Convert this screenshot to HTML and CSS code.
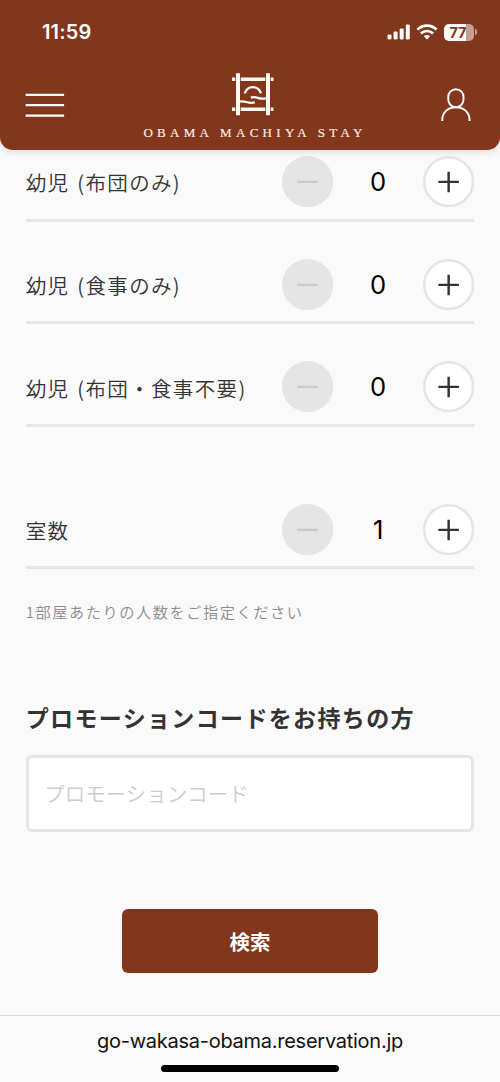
FILE: index.html
```html
<!DOCTYPE html>
<html lang="ja">
<head>
<meta charset="utf-8">
<title>OBAMA MACHIYA STAY</title>
<link rel="stylesheet" href="styles.css">
</head>
<body>
<svg class="defs" width="0" height="0">
  <symbol id="minus" viewBox="0 0 40 40"><circle cx="20" cy="20" r="20" fill="#e5e5e5"/><path d="M12 20.2h16" stroke="#cbcbcb" stroke-width="1.9"/></symbol>
  <symbol id="plus" viewBox="0 0 40 40"><circle cx="20" cy="20" r="19" fill="#fff" stroke="#e5e5e5" stroke-width="2"/><path d="M12 20.2h16M20 12.2v16" stroke="#333" stroke-width="1.9"/></symbol>
</svg>
<div class="screen">
  <header class="header">
    <div class="status">
      <span class="time">11:59</span>
      <div class="indicators">
        <svg width="24" height="16" viewBox="0 0 24 16" fill="#fff"><rect x="0.5" y="10.4" width="4" height="5" rx="1.1"/><rect x="6.6" y="7.6" width="4" height="7.8" rx="1.1"/><rect x="12.7" y="4.4" width="4" height="11" rx="1.1"/><rect x="18.8" y="0.6" width="4" height="14.8" rx="1.1"/></svg>
        <svg class="wifi" width="22" height="16" viewBox="0 0 22 16" fill="none" stroke="#fff" stroke-width="2.7"><path d="M1.4 5.6a13.8 13.8 0 0 1 19.2 0"/><path d="M4.9 9.5a8.7 8.7 0 0 1 12.2 0"/><path d="M11 15.5l-3.2-3.3a4.6 4.6 0 0 1 6.4 0z" fill="#fff" stroke="none"/></svg>
        <div class="battery"><span class="level">77</span></div>
        <span class="battery-tip"></span>
      </div>
    </div>
    <div class="nav">
      <svg class="menu" width="40" height="25" viewBox="0 0 40 25" stroke="#fff" stroke-width="2.3"><path d="M.6 1.9h38.5M.6 12.2h38.5M.6 22.6h38.5"/></svg>
      <div class="brand">
        <svg width="42" height="43" viewBox="0 0 42 43" fill="none" stroke="#fff8f2"><path d="M0 6.2h41.5M0 36.2h41.5" stroke-width="3.6"/><path d="M6 0v42M36 0v42" stroke="#82371d" stroke-width="5.4"/><path d="M6 .3v42M36 .3v42" stroke-width="4"/><path d="M12.6 20.4c3.2-8.4 13.2-8.4 16.4 0" stroke-width="2.3"/><path d="M8 28.6c5-1.6 8 2.8 14.8.8M18.8 24.6c6-2.2 8 2.9 15.2.5" stroke-width="2.2"/></svg>
        <span class="brand-name">OBAMA MACHIYA STAY</span>
      </div>
      <svg class="user" width="30" height="34" viewBox="0 0 30 34" fill="none" stroke="#fff" stroke-width="1.9"><rect x="7.3" y="1.2" width="15.2" height="18" rx="7.6"/><path d="M1.3 33v-1.5c0-7.2 6-12.3 13.6-12.3s13.6 5.1 13.6 12.3V33"/></svg>
    </div>
  </header>
  <main class="content">
    <div class="row"><span class="label">幼児 (布団のみ)</span><div class="stepper"><svg><use href="#minus"/></svg><span>0</span><svg><use href="#plus"/></svg></div></div>
    <div class="row"><span class="label">幼児 (食事のみ)</span><div class="stepper"><svg><use href="#minus"/></svg><span>0</span><svg><use href="#plus"/></svg></div></div>
    <div class="row"><span class="label">幼児 (布団・食事不要)</span><div class="stepper"><svg><use href="#minus"/></svg><span>0</span><svg><use href="#plus"/></svg></div></div>
    <div class="row rooms"><span class="label">室数</span><div class="stepper"><svg><use href="#minus"/></svg><span>1</span><svg><use href="#plus"/></svg></div></div>
    <p class="note">1部屋あたりの人数をご指定ください</p>
    <h2 class="title">プロモーションコードをお持ちの方</h2>
    <input class="promo" type="text" placeholder="プロモーションコード">
    <button class="search">検索</button>
  </main>
  <footer class="browser-bar"><span class="url">go-wakasa-obama.reservation.jp</span><span class="home"></span></footer>
</div>
</body>
</html>
```
FILE: styles.css
```css
* { box-sizing: border-box; }
body { margin: 0; background: #fafafa; font-family: "Noto Sans CJK JP", sans-serif; color: #333; }
.defs { display: block; height: 0; }
.screen { width: 500px; height: 1082px; overflow: hidden; display: flex; flex-direction: column; }
.header { flex: none; height: 150px; background: #82371d; border-radius: 0 0 13px 13px; box-shadow: 0 1px 10px rgba(0,0,0,.15); position: relative; z-index: 1; }
.status { height: 64px; padding: 0 24px 0 42px; display: flex; justify-content: space-between; align-items: center; color: #fff; }
.time { font: 600 20px/24px Inter, sans-serif; letter-spacing: .15px; }
.indicators { display: flex; align-items: center; }
.wifi { margin: 0 6px 0 5px; }
.battery { width: 30px; height: 17px; border-radius: 5px; background: linear-gradient(90deg, #fff 75%, #c79e91 75%); display: flex; align-items: center; padding-left: 5.5px; }
.level { font: 700 14.5px/17px Inter, sans-serif; color: #82371d; letter-spacing: -.2px; }
.battery-tip { width: 2px; height: 6px; margin: 0 -1px 0 1px; border-radius: 0 2px 2px 0; background: #c79e91; }
.nav { display: flex; justify-content: space-between; padding: 0 29px 0 25px; }
.menu { margin-top: 29px; }
.user { margin-top: 24px; }
.brand { display: flex; flex-direction: column; align-items: center; margin: 9px 0 0 0; width: 224px; }
.brand-name { font: 13px/16px "Liberation Serif", serif; letter-spacing: 4.3px; color: #fff0e8; white-space: nowrap; margin: 9px 0 0 4px; -webkit-text-stroke: .15px #fff0e8; }
.content { flex: none; height: 865px; padding: 0 25.7px; display: flex; flex-direction: column; }
.row { flex: none; height: 102.6px; border-bottom: 3px solid #e6e6e6; display: flex; justify-content: space-between; align-items: flex-end; padding-bottom: 11.4px; }
.row:first-child { height: 71.8px; }
.rooms { height: 142.3px; }
.label { font-size: 20.5px; font-weight: 350; line-height: 50px; letter-spacing: 1.35px; word-spacing: 2px; white-space: nowrap; }
.stepper { display: flex; align-items: center; }
.stepper svg { width: 51.3px; height: 51.3px; display: block; }
.stepper span { width: 89.8px; text-align: center; font-size: 25.6px; line-height: 51px; font-family: Inter, sans-serif; font-weight: 400; color: #000; }
.note { margin: 30px 0 0; font-size: 15.2px; line-height: 24px; letter-spacing: 1.55px; font-weight: 350; color: #8c8c8c; white-space: nowrap; }
.title { margin: 77px 0 0; font-size: 23px; line-height: 34px; letter-spacing: 1.35px; font-weight: 700; white-space: nowrap; }
.promo { flex: none; margin: 21px 0 0; width: 100%; height: 77px; border: 3px solid #e6e6e6; border-radius: 6px; background: #fff; padding: 0 16px 2px 15.5px; font: 350 20.5px "Noto Sans CJK JP", sans-serif; }
.promo::placeholder { color: #ccc; opacity: 1; }
.search { flex: none; align-self: center; width: 256px; height: 64px; margin-top: 77px; border: 0; border-radius: 6px; background: #82371d; color: #fff; font: 700 20.5px "Noto Sans CJK JP", sans-serif; }
.browser-bar { flex: none; height: 67px; border-top: 1px solid #dedede; display: flex; flex-direction: column; align-items: center; padding-top: 12px; }
.url { font: 400 20px/26px Inter, sans-serif; letter-spacing: -.26px; color: #111; }
.home { width: 178px; height: 6.5px; border-radius: 4px; background: #000; margin-top: 11px; }
```
